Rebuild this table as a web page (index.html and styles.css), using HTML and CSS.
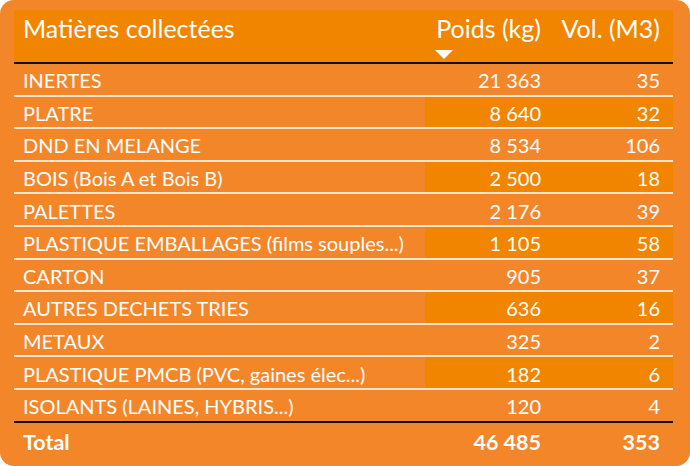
FILE: index.html
```html
<!DOCTYPE html>
<html lang="fr">
<head>
<meta charset="utf-8">
<link rel="stylesheet" href="styles.css">
</head>
<body>
<div class="card">
  <table class="grid">
    <colgroup>
      <col class="c-name">
      <col class="c-poids">
      <col class="c-vol">
    </colgroup>
    <thead>
      <tr>
        <th class="name">Matières collectées</th>
        <th class="num poids">Poids (kg)<span class="sort"></span></th>
        <th class="num vol">Vol. (M3)</th>
      </tr>
    </thead>
    <tbody>
      <tr><td class="name">INERTES</td><td class="num poids">21 363</td><td class="num vol">35</td></tr>
      <tr class="alt"><td class="name">PLATRE</td><td class="num poids">8 640</td><td class="num vol">32</td></tr>
      <tr><td class="name">DND EN MELANGE</td><td class="num poids">8 534</td><td class="num vol">106</td></tr>
      <tr class="alt"><td class="name">BOIS (Bois A et Bois B)</td><td class="num poids">2 500</td><td class="num vol">18</td></tr>
      <tr><td class="name">PALETTES</td><td class="num poids">2 176</td><td class="num vol">39</td></tr>
      <tr class="alt"><td class="name">PLASTIQUE EMBALLAGES (films souples...)</td><td class="num poids">1 105</td><td class="num vol">58</td></tr>
      <tr><td class="name">CARTON</td><td class="num poids">905</td><td class="num vol">37</td></tr>
      <tr class="alt"><td class="name">AUTRES DECHETS TRIES</td><td class="num poids">636</td><td class="num vol">16</td></tr>
      <tr><td class="name">METAUX</td><td class="num poids">325</td><td class="num vol">2</td></tr>
      <tr class="alt"><td class="name">PLASTIQUE PMCB (PVC, gaines élec...)</td><td class="num poids">182</td><td class="num vol">6</td></tr>
      <tr class="last"><td class="name">ISOLANTS (LAINES, HYBRIS...)</td><td class="num poids">120</td><td class="num vol">4</td></tr>
    </tbody>
    <tfoot>
      <tr>
        <td class="name">Total</td>
        <td class="num poids">46 485</td>
        <td class="num vol">353</td>
      </tr>
    </tfoot>
  </table>
</div>
</body>
</html>
```

FILE: styles.css
```css
html, body {
  margin: 0;
  padding: 0;
  background: #ffffff;
}

.card {
  width: 690px;
  height: 466px;
  box-sizing: border-box;
  padding: 10px 17px 0 14px;
  background: #f4862a;
  border-radius: 14px;
  font-family: Lato, "Open Sans", sans-serif;
  color: #ffffff;
}

.grid {
  width: 659px;
  border-collapse: collapse;
  table-layout: fixed;
}

.c-name { width: 411px; }
.c-poids { width: 125px; }
.c-vol { width: 123px; }

.grid th,
.grid td {
  padding: 0;
  white-space: nowrap;
}

.name { padding-left: 9px !important; text-align: left; }
.num { text-align: right; }
.poids { padding-right: 9px !important; }
.vol { padding-right: 13px !important; }

thead tr {
  background: #f18500;
  border-bottom: 2px solid #111111;
}

thead th {
  height: 53px;
  box-sizing: border-box;
  vertical-align: top;
  padding-top: 4px !important;
  font-size: 25px;
  line-height: 28px;
  font-weight: 400;
}

.sort {
  display: block;
  width: 0;
  height: 0;
  margin-top: 8px;
  margin-left: 10px;
  border-left: 9px solid transparent;
  border-right: 9px solid transparent;
  border-top: 9px solid #ffffff;
}

tbody tr {
  border-bottom: 2px solid #fbe6d2;
}

tbody td {
  height: 28.6px;
  padding-top: 2px !important;
  font-size: 20px;
  line-height: 22px;
  vertical-align: middle;
}

tbody tr.alt td.poids,
tbody tr.alt td.vol {
  background: #f18500;
}

tbody tr.last {
  border-bottom: 2px solid #111111;
}

tfoot td {
  height: 38px;
  font-size: 21.5px;
  font-weight: 700;
  vertical-align: middle;
}
```
